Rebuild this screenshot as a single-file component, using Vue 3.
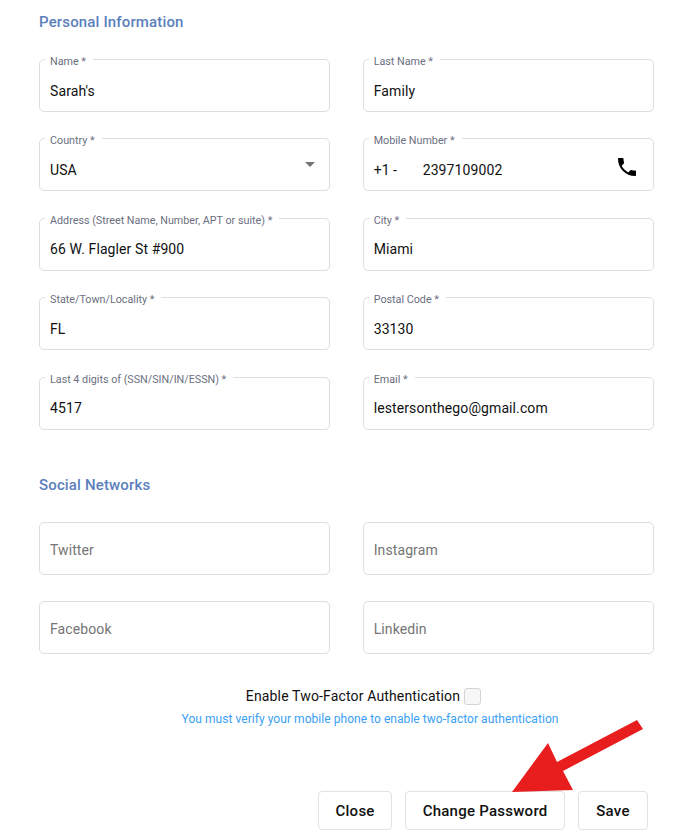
<template>
  <div class="form-page">
    <h3 class="section-title">Personal Information</h3>
    <div class="field-grid">
      <div v-for="item in personal" :key="item.label" class="field has-label">
        <label class="field-label">{{ item.label }}</label>
        <span v-if="item.prefix" class="prefix">{{ item.prefix }}</span>
        <input class="field-input" :value="item.value" readonly />
        <svg v-if="item.select" class="caret" viewBox="0 0 12 6"><path d="M0 0h12L6 6z" /></svg>
        <svg v-if="item.phone" class="phone" viewBox="0 0 24 24">
          <path d="M6.62 10.79c1.44 2.83 3.76 5.14 6.59 6.59l2.2-2.2c.27-.27.67-.36 1.02-.24 1.12.37 2.33.57 3.57.57.55 0 1 .45 1 1V20c0 .55-.45 1-1 1-9.39 0-17-7.61-17-17 0-.55.45-1 1-1h3.5c.55 0 1 .45 1 1 0 1.25.2 2.45.57 3.57.11.35.03.74-.25 1.02l-2.2 2.2z" />
        </svg>
      </div>
    </div>

    <h3 class="section-title social-title">Social Networks</h3>
    <div class="field-grid">
      <div v-for="name in social" :key="name" class="field">
        <input class="field-input" :placeholder="name" readonly />
      </div>
    </div>

    <div class="two-factor">
      <div class="two-factor-row">
        <span>Enable Two-Factor Authentication</span>
        <span class="checkbox"></span>
      </div>
      <p class="two-factor-note">You must verify your mobile phone to enable two-factor authentication</p>
    </div>

    <div class="actions">
      <button class="btn">Close</button>
      <button class="btn">Change Password</button>
      <button class="btn">Save</button>
    </div>

    <!-- annotation arrow on top of the screenshot -->
    <svg class="arrow" width="700" height="834" viewBox="0 0 700 834">
      <polygon points="512,792 548,743 557,762 637,720 643,729 563,771 573,790" fill="#e81e1e" />
    </svg>
  </div>
</template>

<script setup>
const personal = [
  { label: 'Name *', value: "Sarah's" },
  { label: 'Last Name *', value: 'Family' },
  { label: 'Country *', value: 'USA', select: true },
  { label: 'Mobile Number *', value: '2397109002', prefix: '+1 -', phone: true },
  { label: 'Address (Street Name, Number, APT or suite) *', value: '66 W. Flagler St #900' },
  { label: 'City *', value: 'Miami' },
  { label: 'State/Town/Locality *', value: 'FL' },
  { label: 'Postal Code *', value: '33130' },
  { label: 'Last 4 digits of (SSN/SIN/IN/ESSN) *', value: '4517' },
  { label: 'Email *', value: 'lestersonthego@gmail.com' }
]

const social = ['Twitter', 'Instagram', 'Facebook', 'Linkedin']
</script>

<style>
html,
body {
  background: #fff;
}
</style>

<style scoped>
.form-page {
  position: relative;
  box-sizing: border-box;
  width: 700px;
  height: 834px;
  padding: 13px 46px 0 39px;
  overflow: hidden;
  font-family: Roboto, "Liberation Sans", sans-serif;
  color: #111;
}

.section-title {
  margin: 0 0 27px;
  height: 19px;
  font-size: 15px;
  line-height: 19px;
  font-weight: 500;
  letter-spacing: 0.15px;
  color: #5b7fbc;
}

.social-title {
  margin-top: 46px;
  margin-bottom: 26.95px;
}

.field-grid {
  display: grid;
  grid-template-columns: 291px 291px;
  column-gap: 32.7px;
  row-gap: 26.45px;
}

.field {
  position: relative;
  display: flex;
  align-items: center;
  box-sizing: border-box;
  height: 53px;
  padding: 3px 10px 0;
  border: 1px solid #dedede;
  border-radius: 5px;
}

.has-label {
  padding-top: 10px;
}

.field-label {
  position: absolute;
  top: -4px;
  left: 5px;
  padding: 0 7px 0 5px;
  background: #fff;
  font-size: 10.75px;
  line-height: 12px;
  color: #6b6f80;
  white-space: nowrap;
}

.field-input {
  flex: 1;
  min-width: 0;
  padding: 0;
  border: none;
  outline: none;
  background: transparent;
  font-family: inherit;
  font-size: 14px;
  letter-spacing: 0.1px;
  color: #111;
}

.field-input::placeholder {
  color: #757575;
  opacity: 1;
}

.prefix {
  width: 49px;
  flex: none;
  font-size: 14px;
}

.caret {
  position: absolute;
  top: 23px;
  right: 14px;
  width: 10px;
  height: 5px;
  fill: #757575;
}

.phone {
  flex: none;
  width: 24px;
  height: 24px;
  margin-right: 4px;
  margin-top: -5px;
  fill: #000;
}

.two-factor {
  margin-top: 33px;
  text-align: center;
}

.two-factor-row {
  display: flex;
  justify-content: center;
  align-items: center;
  gap: 4px;
  height: 18px;
  padding-left: 34px;
  font-size: 14px;
  letter-spacing: 0.15px;
}

.checkbox {
  box-sizing: border-box;
  width: 17px;
  height: 17px;
  border: 1px solid #d4d4d4;
  border-radius: 3px;
  background: #f7f7f7;
}

.two-factor-note {
  margin: 6px 0 0;
  padding-left: 47px;
  font-size: 12px;
  line-height: 16px;
  letter-spacing: 0.05px;
  color: #3aa0f5;
}

.actions {
  display: flex;
  justify-content: flex-end;
  gap: 13px;
  margin-top: 64px;
  padding-right: 6px;
}

.btn {
  height: 39px;
  min-width: 70px;
  padding: 0 16.5px;
  border: 1px solid #e2e2e2;
  border-radius: 4px;
  background: #fff;
  font-family: inherit;
  font-size: 15px;
  font-weight: 500;
  letter-spacing: 0.25px;
  color: #111;
}

.arrow {
  position: absolute;
  top: 0;
  left: 0;
  pointer-events: none;
}
</style>
